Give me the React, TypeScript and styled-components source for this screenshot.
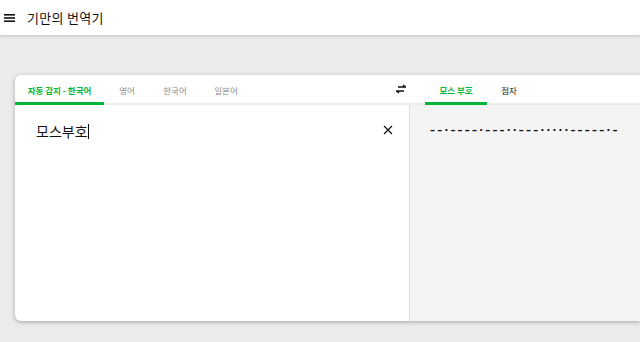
import styled, { createGlobalStyle } from 'styled-components';

const GlobalStyle = createGlobalStyle`
  html, body {
    margin: 0;
    padding: 0;
    background: #ebebeb;
    font-family: "Noto Sans CJK KR", "Noto Sans", sans-serif;
  }
`;

const Page = styled.div`
  width: 640px;
  height: 342px;
  overflow: hidden;
  display: flex;
  flex-direction: column;
`;

const TopBar = styled.header`
  height: 35px;
  background: #fff;
  display: flex;
  align-items: center;
  gap: 11px;
  padding-left: 4px;
  box-shadow: 0 1px 3px rgba(0, 0, 0, 0.18);
  position: relative;
  z-index: 1;
`;

const Title = styled.h1`
  margin: 0;
  font-size: 13px;
  font-weight: 400;
  color: #111;
  letter-spacing: 0.3px;
`;

const Main = styled.main`
  padding: 40px 0 0 15px;
`;

const Card = styled.section`
  height: 246px;
  background: #fff;
  border-radius: 6px 0 0 6px;
  box-shadow: 0 1px 4px rgba(0, 0, 0, 0.3);
  display: grid;
  grid-template-columns: 395px 1fr;
  grid-template-rows: 30px 1fr;
  overflow: hidden;
`;

const TabRow = styled.div<{ $indent?: number }>`
  display: flex;
  align-items: stretch;
  border-bottom: 2px solid #ececec;
  padding-left: ${(p) => p.$indent ?? 0}px;
`;

const Tab = styled.div<{ $active?: boolean; $width: number; $muted?: boolean }>`
  width: ${(p) => p.$width}px;
  display: flex;
  align-items: center;
  justify-content: center;
  font-size: 8.5px;
  font-weight: ${(p) => (p.$active ? 700 : 400)};
  color: ${(p) => (p.$active ? '#03b63a' : p.$muted ? '#8a8a8a' : '#222')};
  margin-bottom: -2px;
  border-bottom: 3px solid ${(p) => (p.$active ? '#03b63a' : 'transparent')};
  box-sizing: border-box;
  padding-top: 2px;
`;

const TabSpacer = styled.div`
  flex: 1;
  display: flex;
  align-items: center;
  justify-content: flex-end;
  padding-right: 3px;
`;

const SourcePane = styled.div`
  position: relative;
  padding: 16px 20px;
  border-right: 1px solid #dcdcdc;
`;

const SourceText = styled.div`
  font-size: 14px;
  color: #111;
  display: flex;
  align-items: center;
  padding-left: 1px;
`;

const Caret = styled.span`
  display: inline-block;
  width: 1px;
  height: 15px;
  background: #111;
`;

const ClearButton = styled.button`
  position: absolute;
  top: 20px;
  right: 16px;
  background: none;
  border: none;
  padding: 0;
  display: flex;
  cursor: pointer;
`;

const TargetPane = styled.div`
  background: #f4f4f4;
  padding: 20px 20px;
`;

const Morse = styled.div`
  font-family: "DejaVu Sans", sans-serif;
  font-size: 10px;
  font-weight: 700;
  letter-spacing: 2.2px;
  color: #111;
  white-space: nowrap;
`;

const MenuIcon = () => (
  <svg width="12" height="12" viewBox="0 0 12 12">
    <rect x="0" y="2" width="11" height="1.6" fill="#111" />
    <rect x="0" y="5.2" width="11" height="1.6" fill="#111" />
    <rect x="0" y="8.4" width="11" height="1.6" fill="#111" />
  </svg>
);

const SwapIcon = () => (
  <svg width="12" height="10" viewBox="0 0 12 10">
    <path d="M3 3h8M8 1l2.5 2" stroke="#111" strokeWidth="1.6" fill="none" />
    <path d="M9 7H1M4 9L1.5 7" stroke="#111" strokeWidth="1.6" fill="none" />
  </svg>
);

const CloseIcon = () => (
  <svg width="10" height="10" viewBox="0 0 10 10">
    <path d="M1 1l8 8M9 1l-8 8" stroke="#111" strokeWidth="1.2" />
  </svg>
);

export default function App() {
  return (
    <Page>
      <GlobalStyle />
      <TopBar>
        <MenuIcon />
        <Title>기만의 번역기</Title>
      </TopBar>
      <Main>
        <Card>
          <TabRow>
            <Tab $active $width={89}>자동 감지 - 한국어</Tab>
            <Tab $muted $width={46}>영어</Tab>
            <Tab $muted $width={50}>한국어</Tab>
            <Tab $muted $width={52}>일본어</Tab>
            <TabSpacer>
              <SwapIcon />
            </TabSpacer>
          </TabRow>
          <TabRow $indent={15}>
            <Tab $active $width={62}>모스 부호</Tab>
            <Tab $width={44}>점자</Tab>
          </TabRow>
          <SourcePane>
            <SourceText>
              모스부호<Caret />
            </SourceText>
            <ClearButton aria-label="지우기">
              <CloseIcon />
            </ClearButton>
          </SourcePane>
          <TargetPane>
            <Morse>––·––––·–––··–––·····–––––·–</Morse>
          </TargetPane>
        </Card>
      </Main>
    </Page>
  );
}
